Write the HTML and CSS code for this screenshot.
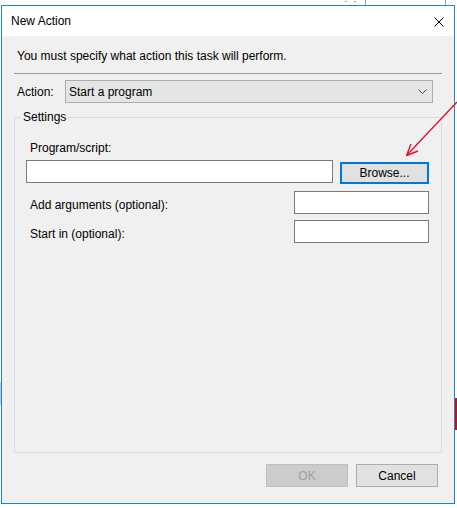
FILE: index.html
```html
<!DOCTYPE html>
<html>
<head>
<meta charset="utf-8">
<link rel="stylesheet" href="styles.css">
</head>
<body>
<div class="desk">
  <div class="bg-mark m1"></div>
  <div class="bg-mark m2"></div>
  <div class="bg-mark m3"></div>
  <div class="bg-mark m4"></div>
  <div class="bg-mark m5"></div>
  <div class="red-strip"></div>

  <div class="window">
    <div class="titlebar">
      <span class="title">New Action</span>
      <svg class="close" width="10" height="10" viewBox="0 0 10 10"><path d="M0.5 0.5 L9.5 9.5 M9.5 0.5 L0.5 9.5" stroke="#000" stroke-width="1" fill="none"/></svg>
    </div>
    <div class="content">
      <div class="intro">You must specify what action this task will perform.</div>
      <div class="sep"></div>
      <div class="action-row">
        <span class="action-label">Action:</span>
        <div class="combo">
          <span>Start a program</span>
          <svg class="chev" width="9" height="5" viewBox="0 0 9 5"><path d="M0.5 0.5 L4.5 4.5 L8.5 0.5" stroke="#444" stroke-width="1" fill="none"/></svg>
        </div>
      </div>
      <fieldset class="group">
        <legend>Settings</legend>
        <div class="group-inner">
          <div class="lbl first">Program/script:</div>
          <div class="prog-row">
            <div class="input prog"></div>
            <div class="btn browse">Browse...</div>
          </div>
          <div class="field-row args">
            <span class="lbl">Add arguments (optional):</span>
            <div class="input small"></div>
          </div>
          <div class="field-row start">
            <span class="lbl">Start in (optional):</span>
            <div class="input small"></div>
          </div>
        </div>
      </fieldset>
      <div class="buttons">
        <div class="btn disabled">OK</div>
        <div class="btn">Cancel</div>
      </div>
    </div>
  </div>

  <svg class="arrow" width="457" height="508" viewBox="0 0 457 508">
    <path d="M457 102 L406.5 155.5" stroke="#e8112d" stroke-width="1.4" fill="none"/>
    <path d="M406.5 155.5 L411 144 M406.5 155.5 L418 151" stroke="#e8112d" stroke-width="1.4" fill="none"/>
  </svg>
</div>
</body>
</html>
```

FILE: styles.css
```css
html, body {
  margin: 0;
  padding: 0;
  background: #ffffff;
}

body {
  font-family: "Liberation Sans", Arial, sans-serif;
  font-size: 12px;
  color: #000;
}

.desk {
  position: relative;
  width: 457px;
  height: 508px;
  overflow: hidden;
  padding-top: 5px;
  padding-left: 1px;
  box-sizing: border-box;
}

.bg-mark {
  position: absolute;
  background: #9a9a9a;
}
.m1 { left: 365px; top: 0; width: 1px; height: 5px; }
.m2 { left: 445px; top: 0; width: 1px; height: 5px; }
.m3 { left: 345px; top: 1px; width: 2px; height: 1px; }
.m4 { left: 354px; top: 1px; width: 2px; height: 1px; }
.m5 { left: 0; top: 382px; width: 1px; height: 23px; background: #c8c8c8; }

.red-strip {
  position: absolute;
  left: 455px;
  top: 398px;
  width: 2px;
  height: 32px;
  background: #c0101e;
}

.window {
  width: 454px;
  height: 499px;
  box-sizing: border-box;
  border: 1px solid #1883d7;
  display: flex;
  flex-direction: column;
  background: #f0f0f0;
}

.titlebar {
  height: 30px;
  background: #ffffff;
  display: flex;
  align-items: center;
  justify-content: space-between;
  padding: 0 10px 0 9px;
  flex: none;
}

.title {
  line-height: 16px;
}

.close {
  display: block;
  margin-top: 1px;
}

.content {
  flex: 1;
  padding: 0 12px;
  display: flex;
  flex-direction: column;
}

.intro {
  margin-top: 12px;
  padding-left: 3px;
  line-height: 16px;
}

.sep {
  margin-top: 9px;
  height: 1px;
  background: #a0a0a0;
}

.action-row {
  margin-top: 6px;
  display: flex;
  align-items: center;
}

.action-label {
  width: 48px;
  padding-left: 3px;
  line-height: 16px;
}

.combo {
  width: 368px;
  height: 23px;
  box-sizing: border-box;
  border: 1px solid #adadad;
  background: #e5e5e5;
  display: flex;
  align-items: center;
  justify-content: space-between;
  padding: 0 5px 0 3px;
}

.chev {
  display: block;
}

.group {
  margin: 6px 0 0 0;
  padding: 0;
  border: 1px solid #dcdcdc;
  height: 344px;
  box-sizing: border-box;
  min-width: 0;
}

.group legend {
  margin-left: 6px;
  padding: 0 2px;
  line-height: 17px;
}

.group-inner {
  padding: 14px 12px 0 11px;
}

.lbl {
  line-height: 16px;
}

.lbl.first {
  padding-left: 4px;
}

.prog-row {
  margin-top: 4px;
  display: flex;
  align-items: flex-start;
  gap: 7px;
}

.input {
  height: 23px;
  box-sizing: border-box;
  border: 1px solid #7a7a7a;
  background: #ffffff;
}

.input.prog {
  width: 307px;
}

.input.small {
  width: 135px;
}

.btn {
  width: 82px;
  height: 23px;
  box-sizing: border-box;
  border: 1px solid #adadad;
  background: #e1e1e1;
  display: flex;
  align-items: center;
  justify-content: center;
  line-height: 16px;
}

.btn.browse {
  width: 89px;
  height: 22px;
  margin-top: 2px;
  border: 2px solid #0078d7;
}

.btn.disabled {
  background: #cccccc;
  border-color: #bfbfbf;
  color: #a0a0a0;
}

.field-row {
  display: flex;
  align-items: flex-end;
  justify-content: space-between;
  padding-left: 4px;
}

.field-row .lbl {
  padding-bottom: 1px;
}

.field-row.args {
  margin-top: 7px;
}

.field-row.start {
  margin-top: 6px;
}

.buttons {
  margin-top: 11px;
  display: flex;
  justify-content: flex-end;
  gap: 8px;
  padding-right: 4px;
}

.arrow {
  position: absolute;
  left: 0;
  top: 0;
  pointer-events: none;
}
```
